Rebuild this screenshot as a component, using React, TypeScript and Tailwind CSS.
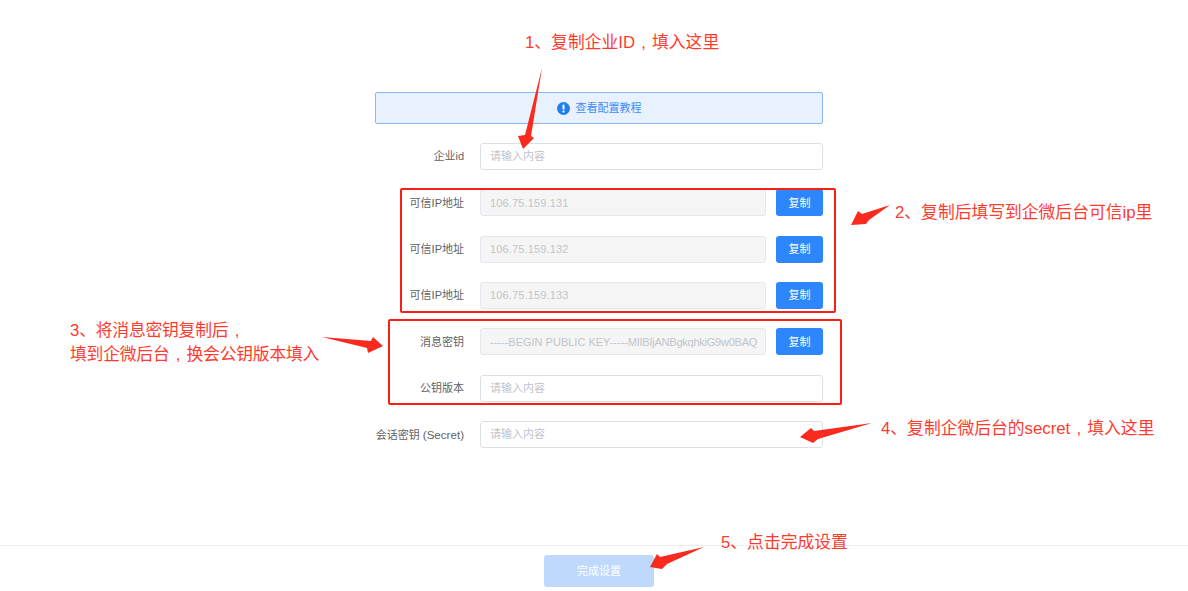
const font = '[font-family:"Liberation_Sans","Noto_Sans_CJK_SC",sans-serif]';

function Row({ label, children }: { label: React.ReactNode; children: React.ReactNode }) {
  return (
    <div className="flex h-[27px] items-center">
      <label className="mr-4 w-[89px] shrink-0 whitespace-nowrap text-right text-[11px] text-[#606266]">{label}</label>
      {children}
    </div>
  );
}

function TextInput() {
  return (
    <div className="flex h-[27px] w-full items-center rounded-[3px] border border-[#dcdfe6] bg-white px-[9px] text-[11px] text-[#c0c4cc]">
      请输入内容
    </div>
  );
}

function CopyRow({ label, children }: { label: string; children: React.ReactNode }) {
  return (
    <Row label={label}>
      <div className="flex h-[27px] w-[287px] items-center overflow-hidden whitespace-nowrap rounded-[3px] border border-[#e4e7ed] bg-[#f5f5f5] px-[9px] text-[11px] text-[#c0c4cc]">
        {children}
      </div>
      <button className="ml-[10px] h-[27px] w-[47px] shrink-0 rounded-[3px] bg-[#2e86fb] text-[11px] text-white">复制</button>
    </Row>
  );
}

function Note({ className, children }: { className: string; children: React.ReactNode }) {
  return <div className={`absolute whitespace-nowrap text-[16.8px] leading-[24px] text-[#ff3a2f] ${className}`}>{children}</div>;
}

// comma sits on the baseline, centred in a full-width cell
function Comma() {
  return <span className="inline-block w-[17px] text-center">,</span>;
}

export default function App() {
  return (
    <div className={`relative h-[591px] w-[1188px] overflow-hidden bg-white ${font}`}>
      <div className="ml-[375px] w-[448px] pt-[92px]">
        <div className="mb-[19px] flex h-[32px] items-center justify-center rounded-[2px] border border-[#8ab8f7] bg-[#e8f1fe] text-[11px] text-[#3c8cf5]">
          <svg viewBox="0 0 14 14" className="mr-[6px] h-[13px] w-[13px]">
            <circle cx="7" cy="7" r="7" fill="#1f7ff2" />
            <rect x="5.9" y="2.8" width="2.2" height="5.4" rx="1" fill="#fff" />
            <circle cx="7" cy="10.3" r="1.2" fill="#fff" />
          </svg>
          查看配置教程
        </div>
        <div className="flex flex-col gap-[19.35px]">
          <Row label="企业id"><TextInput /></Row>
          <CopyRow label="可信IP地址"><span className="tracking-[0.15px]">106.75.159.131</span></CopyRow>
          <CopyRow label="可信IP地址"><span className="tracking-[0.15px]">106.75.159.132</span></CopyRow>
          <CopyRow label="可信IP地址"><span className="tracking-[0.15px]">106.75.159.133</span></CopyRow>
          <CopyRow label="消息密钥">
            -----BEGIN PUBLIC KEY-----<span className="tracking-[-0.23px]">MIIBIjANBgkqhkiG9w0BAQ</span>
          </CopyRow>
          <Row label="公钥版本"><TextInput /></Row>
          <Row label={<>会话密钥 <span className="text-[11.6px]">(Secret)</span></>}><TextInput /></Row>
        </div>
      </div>

      <div className="mt-[97px] flex justify-start border-t border-[#ebeef5] pl-[544px] pt-[9px]">
        <button className="h-[32px] w-[110px] rounded-[3px] bg-[#bfd9fd] text-[11px] text-white">完成设置</button>
      </div>

      {/* annotations drawn over the form */}
      <div className="absolute left-[400px] top-[188px] h-[125px] w-[436px] rounded-[2px] border-2 border-[#fa1e16]" />
      <div className="absolute left-[388px] top-[319px] h-[86px] w-[454px] rounded-[2px] border-2 border-[#fa1e16]" />

      <Note className="left-[525px] top-[31px]">1、复制企业ID<Comma />填入这里</Note>
      <Note className="left-[895px] top-[201px]">2、复制后填写到企微后台可信ip里</Note>
      <Note className="left-[70px] top-[319px] tracking-[-0.2px]">3、将消息密钥复制后<Comma /><br />填到企微后台<Comma />换会公钥版本填入</Note>
      <Note className="left-[881px] top-[417px]">4、复制企微后台的secret<Comma />填入这里</Note>
      <Note className="left-[721px] top-[531px]">5、点击完成设置</Note>

      <svg viewBox="0 0 1188 591" className="pointer-events-none absolute left-0 top-0 h-[591px] w-[1188px]" fill="#fa2a1e">
        <path d="M542 68 L531 136 L534 138 L523 149 L518 136 L525 135 Z" />
        <path d="M890 205 L869 220 L866 224 L851 225 L858 211 L862 214 Z" />
        <path d="M322 337 L371 341 L373 337 L383 346 L368 353 L367 348 Z" />
        <path d="M872 423 L818 439 L813 443 L800 437 L811 428 L814 431 Z" />
        <path d="M704 547 L667 564 L662 569 L650 567 L657 554 L660 557 Z" />
      </svg>
    </div>
  );
}
